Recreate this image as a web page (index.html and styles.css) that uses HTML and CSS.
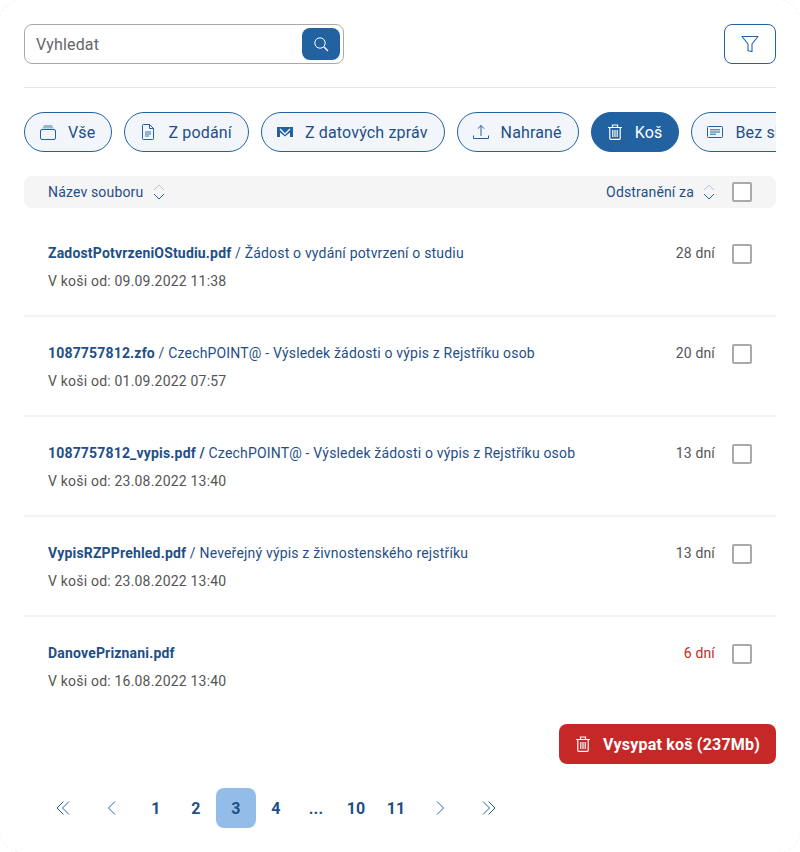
FILE: index.html
```html
<!DOCTYPE html>
<html lang="cs">
<head>
    <meta charset="UTF-8">
    <meta name="viewport" content="width=device-width, initial-scale=1.0">
    <title>Koš</title>
    <link rel="stylesheet" href="styles.css">
</head>
<body>
    <main class="panel">
        <div class="toolbar">
            <div class="search">
                <input class="search-input" type="text" placeholder="Vyhledat">
                <button class="search-btn">
                    <svg width="16" height="16" viewBox="0 0 16 16" fill="none" stroke="#fff" stroke-width="1"><circle cx="7" cy="7" r="5.2"/><path d="M10.8 10.8 15 15" stroke-width="1.3"/></svg>
                </button>
            </div>
            <button class="filter-btn">
                <svg width="18" height="18" viewBox="0 0 18 18" fill="none" stroke="#2262a1" stroke-width="1.1"><path d="M1 1.500h16L11 9v7.500l-4-.8V9z" stroke-linejoin="round"/></svg>
            </button>
        </div>

        <div class="chips">
            <a class="chip">
                <svg class="chip-icon" width="16" height="16" viewBox="0 0 16 16" fill="none" stroke="#2262a1"><path d="M2.500 4.500 4 1h8l1.500 3.500z" fill="#9db4cf" stroke="none"/><rect x="0.500" y="5.500" width="15" height="10" rx="1.500"/></svg>
                Vše
            </a>
            <a class="chip">
                <svg class="chip-icon" width="16" height="16" viewBox="0 0 16 16" fill="none" stroke="#2262a1"><path d="M2.500 1.500a1 1 0 0 1 1-1h6l4 4v10a1 1 0 0 1-1 1h-9a1 1 0 0 1-1-1zM9.500 .5v4h4"/><path d="M5 8h6M5 10h6M5 12h4" stroke-width=".9"/></svg>
                Z podání
            </a>
            <a class="chip">
                <svg class="chip-icon" width="16" height="16" viewBox="0 0 16 16"><path d="M0 3h16v10h-3V8.500L8 12.500 3 8.500V13H0z" fill="#2262a1"/><path d="M3 5 8 10l5-5" fill="none" stroke="#f2f6fb" stroke-width="1.400"/></svg>
                Z datových zpráv
            </a>
            <a class="chip">
                <svg class="chip-icon" width="16" height="16" viewBox="0 0 16 16" fill="none" stroke="#2262a1"><path d="M.5 11.500v3h15v-3M8 12V1.500M4.800 4.700 8 1.500l3.200 3.200"/></svg>
                Nahrané
            </a>
            <a class="chip chip-active">
                <svg class="chip-icon" width="16" height="16" viewBox="0 0 16 16" fill="none" stroke="#fff" stroke-width="1.200"><path d="M1 3.500h14M5.500 3.500V1h5v2.500M2.800 3.500v11a.8.8 0 0 0 .8.8h8.800a.8.8 0 0 0 .8-.8v-11M5.800 6v7M8 6v7M10.200 6v7"/></svg>
                Koš
            </a>
            <a class="chip">
                <svg class="chip-icon" width="16" height="16" viewBox="0 0 16 16" fill="none" stroke="#2262a1"><rect x=".5" y="2.500" width="15" height="11" rx="1"/><path d="M3 5.800h10M3 8h10M3 10.200h6" stroke-width="1"/></svg>
                Bez složky
            </a>
        </div>

        <div class="table-head">
            <div class="head-cell head-name">Název souboru
                <svg class="sort-icon" width="12" height="16" viewBox="0 0 12 16" fill="none"><path d="M1 6 6 1l5 5" stroke="#b5c5d8"/><path d="M1 10l5 5 5-5" stroke="#2262a1"/></svg>
            </div>
            <div class="head-cell">Odstranění za
                <svg class="sort-icon" width="12" height="16" viewBox="0 0 12 16" fill="none"><path d="M1 6 6 1l5 5" stroke="#b5c5d8"/><path d="M1 10l5 5 5-5" stroke="#2262a1"/></svg>
            </div>
            <span class="check"></span>
        </div>

        <ul class="rows">
            <li class="row">
                <div class="row-main">
                    <p class="row-title"><b>ZadostPotvrzeniOStudiu.pdf</b> / Žádost o vydání potvrzení o studiu</p>
                    <p class="row-date">V koši od: 09.09.2022 11:38</p>
                </div>
                <span class="row-days">28 dní</span>
                <span class="check"></span>
            </li>
            <li class="row">
                <div class="row-main">
                    <p class="row-title"><b>1087757812.zfo</b> / CzechPOINT@ - Výsledek žádosti o výpis z Rejstříku osob</p>
                    <p class="row-date">V koši od: 01.09.2022 07:57</p>
                </div>
                <span class="row-days">20 dní</span>
                <span class="check"></span>
            </li>
            <li class="row">
                <div class="row-main">
                    <p class="row-title"><b>1087757812_vypis.pdf /</b> CzechPOINT@ - Výsledek žádosti o výpis z Rejstříku osob</p>
                    <p class="row-date">V koši od: 23.08.2022 13:40</p>
                </div>
                <span class="row-days">13 dní</span>
                <span class="check"></span>
            </li>
            <li class="row">
                <div class="row-main">
                    <p class="row-title"><b>VypisRZPPrehled.pdf</b> / Neveřejný výpis z živnostenského rejstříku</p>
                    <p class="row-date">V koši od: 23.08.2022 13:40</p>
                </div>
                <span class="row-days">13 dní</span>
                <span class="check"></span>
            </li>
            <li class="row">
                <div class="row-main">
                    <p class="row-title"><b>DanovePriznani.pdf</b></p>
                    <p class="row-date">V koši od: 16.08.2022 13:40</p>
                </div>
                <span class="row-days row-days-urgent">6 dní</span>
                <span class="check"></span>
            </li>
        </ul>

        <div class="actions">
            <button class="empty-btn">
                <svg width="16" height="16" viewBox="0 0 16 16" fill="none" stroke="#fff" stroke-width="1.200"><path d="M1 3.500h14M5.500 3.500V1h5v2.500M2.800 3.500v11a.8.8 0 0 0 .8.8h8.800a.8.8 0 0 0 .8-.8v-11M5.800 6v7M8 6v7M10.200 6v7"/></svg>
                Vysypat koš (237Mb)
            </button>
        </div>

        <nav class="pager">
            <a class="page page-arrow"><svg width="14" height="14" viewBox="0 0 14 14" fill="none" stroke="#2262a1"><path d="M6.500 .5 0 7l6.500 6.500M12 .5 5.500 7 12 13.500"/></svg></a>
            <a class="page page-arrow"><svg width="14" height="14" viewBox="0 0 14 14" fill="none" stroke="#2262a1"><path d="M10 .5 3.500 7l6.500 6.500"/></svg></a>
            <a class="page">1</a>
            <a class="page">2</a>
            <a class="page page-current">3</a>
            <a class="page">4</a>
            <a class="page">...</a>
            <a class="page">10</a>
            <a class="page">11</a>
            <a class="page page-arrow"><svg width="14" height="14" viewBox="0 0 14 14" fill="none" stroke="#2262a1"><path d="M4 .5 10.500 7 4 13.500"/></svg></a>
            <a class="page page-arrow"><svg width="14" height="14" viewBox="0 0 14 14" fill="none" stroke="#2262a1"><path d="M2 .5 8.500 7 2 13.500M7.500 .5 14 7l-6.500 6.500"/></svg></a>
        </nav>
    </main>
</body>
</html>
```

FILE: styles.css
```css
* {
    box-sizing: border-box;
}

html, body {
    height: 100%;
    overflow: hidden;
}

body {
    margin: 0;
    background: #fff;
    font-family: Roboto, "Liberation Sans", sans-serif;
    letter-spacing: .16px;
    color: #1f4f85;
}

p {
    margin: 0;
}

/* the dashed border only shows in the rounded corners, the straight sides sit off screen */
.panel {
    width: 802px;
    height: 854px;
    margin: -1px;
    padding: 24px;
    border: 1px dashed #f3f3f3;
    border-radius: 24px;
}

/* top bar */
.toolbar {
    display: flex;
    justify-content: space-between;
    padding-bottom: 23px;
    border-bottom: 1px solid #e6e6e6;
}

.search {
    display: flex;
    align-items: center;
    width: 320px;
    height: 40px;
    padding: 0 3px 0 11px;
    border: 1px solid #aaa;
    border-radius: 8px;
}

.search-input {
    flex: 1;
    min-width: 0;
    border: 0;
    outline: 0;
    padding: 0;
    font: 16px Roboto, sans-serif;
    letter-spacing: .16px;
}

.search-input::placeholder {
    color: #666;
    opacity: 1;
}

.search-btn {
    display: flex;
    align-items: center;
    justify-content: center;
    width: 38px;
    height: 32px;
    padding: 0;
    border: 0;
    border-radius: 8px;
    background: #2262a1;
}

.filter-btn {
    display: flex;
    align-items: center;
    justify-content: center;
    width: 52px;
    height: 40px;
    padding: 0;
    border: 1px solid #2262a1;
    border-radius: 8px;
    background: #fff;
}

/* tabs */
.chips {
    display: flex;
    gap: 12px;
    margin-top: 24px;
    overflow: hidden;
}

.chip {
    display: flex;
    flex-shrink: 0;
    align-items: center;
    height: 40px;
    padding: 0 16px 0 15px;
    border: 1px solid #2262a1;
    border-radius: 20px;
    background: #f2f6fb;
    font-size: 16px;
    letter-spacing: .16px;
    white-space: nowrap;
}

.chip-icon {
    margin-right: 12px;
}

.chip-active {
    background: #2262a1;
    color: #fff;
}

/* table */
.table-head {
    display: flex;
    align-items: center;
    height: 32px;
    margin-top: 24px;
    padding: 0 24px;
    border-radius: 8px;
    background: #f5f5f5;
    font-size: 14px;
}

.head-cell {
    display: flex;
    align-items: center;
}

.head-name {
    flex: 1;
}

.sort-icon {
    margin-left: 9px;
}

.head-name .sort-icon {
    margin-left: 10px;
}

.check {
    flex-shrink: 0;
    width: 20px;
    height: 20px;
    margin-left: 17px;
    border: 2px solid #aaa;
    border-radius: 2px;
    background: #fff;
}

.rows {
    margin: 0;
    padding: 0;
    list-style: none;
}

.row {
    display: flex;
    align-items: flex-start;
    height: 100px;
    padding: 27px 24px 0;
    border-bottom: 2px solid #f3f3f3;
}

.row:first-child {
    padding-top: 36px;
    height: 109px;
}

.row:last-child {
    border-bottom: 0;
}

.row-main {
    flex: 1;
    min-width: 0;
}

.row-title {
    font-size: 14px;
    line-height: 18px;
    letter-spacing: .18px;
}

.row-title b {
    font-weight: 700;
}

.row-date {
    margin-top: 10px;
    font-size: 14px;
    line-height: 18px;
    letter-spacing: .2px;
    color: #555;
}

.row-days {
    font-size: 14px;
    line-height: 18px;
    color: #555;
}

.row-days-urgent {
    color: #c62828;
}

.actions {
    display: flex;
    justify-content: flex-end;
    margin-top: 7px;
}

.empty-btn {
    display: flex;
    align-items: center;
    gap: 12px;
    height: 40px;
    padding: 0 16px;
    border: 0;
    border-radius: 8px;
    background: #c62828;
    color: #fff;
    font: 700 16px Roboto, sans-serif;
    letter-spacing: .2px;
}

/* pagination */
.pager {
    display: flex;
    margin-top: 24px;
    padding-left: 16px;
}

.page {
    display: flex;
    align-items: center;
    justify-content: center;
    width: 40px;
    height: 40px;
    border-radius: 8px;
    font-size: 16px;
    font-weight: 700;
}

.page-arrow {
    width: 48px;
}

.page-current {
    background: #94bce8;
}
```
